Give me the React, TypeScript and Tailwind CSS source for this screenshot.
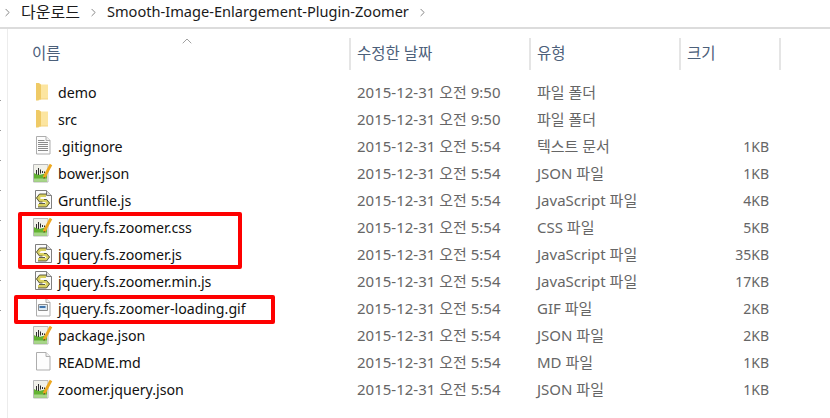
import { ChevronRight, ChevronUp } from 'lucide-react';

type IconKind = 'folder' | 'text' | 'json' | 'js' | 'gif' | 'blank';

type FileRow = {
  name: string;
  date: string;
  kind: string;
  size: string;
  icon: IconKind;
};

const rows: FileRow[] = [
  { name: 'demo', date: '2015-12-31 오전 9:50', kind: '파일 폴더', size: '', icon: 'folder' },
  { name: 'src', date: '2015-12-31 오전 9:50', kind: '파일 폴더', size: '', icon: 'folder' },
  { name: '.gitignore', date: '2015-12-31 오전 5:54', kind: '텍스트 문서', size: '1KB', icon: 'text' },
  { name: 'bower.json', date: '2015-12-31 오전 5:54', kind: 'JSON 파일', size: '1KB', icon: 'json' },
  { name: 'Gruntfile.js', date: '2015-12-31 오전 5:54', kind: 'JavaScript 파일', size: '4KB', icon: 'js' },
  { name: 'jquery.fs.zoomer.css', date: '2015-12-31 오전 5:54', kind: 'CSS 파일', size: '5KB', icon: 'json' },
  { name: 'jquery.fs.zoomer.js', date: '2015-12-31 오전 5:54', kind: 'JavaScript 파일', size: '35KB', icon: 'js' },
  { name: 'jquery.fs.zoomer.min.js', date: '2015-12-31 오전 5:54', kind: 'JavaScript 파일', size: '17KB', icon: 'js' },
  { name: 'jquery.fs.zoomer-loading.gif', date: '2015-12-31 오전 5:54', kind: 'GIF 파일', size: '2KB', icon: 'gif' },
  { name: 'package.json', date: '2015-12-31 오전 5:54', kind: 'JSON 파일', size: '2KB', icon: 'json' },
  { name: 'README.md', date: '2015-12-31 오전 5:54', kind: 'MD 파일', size: '1KB', icon: 'blank' },
  { name: 'zoomer.jquery.json', date: '2015-12-31 오전 5:54', kind: 'JSON 파일', size: '1KB', icon: 'json' },
];

const gripDots = [0, 1, 2, 3, 4, 5, 6, 7];

function FileIcon({ icon }: { icon: IconKind }) {
  if (icon === 'folder') {
    return (
      <svg width="20" height="20" viewBox="0 0 20 20">
        <path d="M3 1h3l2 1.500V17l-3 1.500H3z" fill="#efca66" />
        <path d="M8 2.500h7V17H8z" fill="#fce5a0" />
        <path d="M5 18.500 8 16.500h7V17.500H8.500z" fill="#f3d480" />
      </svg>
    );
  }
  if (icon === 'json') {
    return (
      <svg width="20" height="20" viewBox="0 0 20 20">
        <path d="M.5 1.500h14.500V19H.5z" fill="#f1f1ea" stroke="#b8b8b8" />
        <path d="M1 10c4 2.500 8 2 13-.5V18.500H1z" fill="#62b332" />
        <path d="M1 15.500h13v3H1z" fill="#a7d688" />
        <path d="M3.500 11.500V7M5.500 12V5M7.500 10.500V6.500M9.500 10V8M11.500 10V8.500" stroke="#2f2f2f" strokeWidth="1" />
        <path d="M11 14.500 18 1.500" stroke="#eda81f" strokeWidth="2.800" />
        <path d="M10.500 16l.5-2 1.500.8z" fill="#5b4a22" />
      </svg>
    );
  }
  if (icon === 'js') {
    return (
      <svg width="20" height="20" viewBox="0 0 20 20">
        <path d="M2.500.5h11l5 5v13h-16z" fill="#fbfbfb" stroke="#7f7f7f" />
        <path d="M13.500.5v5h5" fill="#dcdcdc" stroke="#7f7f7f" />
        <path d="M13 5.500H7L5 8l2 2.500h6l2 2.500-2 2.500H5" fill="none" stroke="#d9d060" strokeWidth="3.200" />
        <path d="M14 4H6.500L3.500 8l3 4h3M11 9.500h2.500l3 3.500-3 4H5M6 13.500h6" fill="none" stroke="#4b4b3a" strokeWidth=".9" />
      </svg>
    );
  }
  return (
    <svg width="20" height="20" viewBox="0 0 20 20">
      <path d="M3.500.5H13l4 4v13.500H3.500z" fill="#fdfdfd" stroke="#adadad" />
      <path d="M13 .5v4h4" fill="#f0f0f0" stroke="#adadad" />
      {icon === 'text' && (
        <path d="M5 4.500h6.500M5 6.500h10M5 8.500h10M5 10.500h10M5 12.500h10M5 14.500h10" stroke="#8b8b8b" strokeWidth="1" />
      )}
      {icon === 'gif' && (
        <>
          <path d="M5.500 6.500h9v6h-9z" fill="#dbe8f3" stroke="#8e8e8e" />
          <path d="M6.500 8h6v2h-6z" fill="#3f74ad" />
        </>
      )}
    </svg>
  );
}

function HeaderCell({ label, className }: { label: string; className: string }) {
  return (
    <div className={`flex h-8 items-center border-l-2 border-[#e5e5e5] ${className}`}>
      <span>{label}</span>
    </div>
  );
}

export default function App() {
  return (
    <div className="relative h-[418px] w-[830px] overflow-hidden bg-white text-[14px] font-['Noto_Sans','Noto_Sans_CJK_KR',sans-serif]">
      {/* Address bar */}
      <div className="flex h-[29px] items-center border-b-2 border-[#dcdcdc] pb-[3px] text-[14.600px] text-[#1a1a1a]">
        <ChevronRight size={13} strokeWidth={1.75} className="ml-[1px] text-[#808080]" />
        <span className="ml-[7px] text-[16px]">다운로드</span>
        <ChevronRight size={13} strokeWidth={1.75} className="ml-[7px] text-[#808080]" />
        <span className="ml-[7px]">Smooth-Image-Enlargement-Plugin-Zoomer</span>
        <ChevronRight size={13} strokeWidth={1.75} className="ml-[7px] text-[#808080]" />
      </div>

      {/* Splitter grip dots at the window edge */}
      <div className="absolute left-0 top-[100px] flex flex-col gap-[29px]">
        {gripDots.map((dot) => (
          <div key={dot} className="h-[1px] w-[1px] bg-[#9a9a9a]" />
        ))}
      </div>

      {/* Body with the nav pane divider */}
      <div className="ml-[7px] h-[389px] border-l border-[#ececec] pt-[9px]">
        <div className="relative grid grid-cols-[341px_180px_150px_100px_1fr] text-[15.500px] text-[#4c607a]">
          <ChevronUp size={16} strokeWidth={1} className="absolute left-[171px] top-[-5px] text-[#707070]" />
          <div className="flex h-8 items-center pl-[24px]">이름</div>
          <HeaderCell label="수정한 날짜" className="pl-[6px]" />
          <HeaderCell label="유형" className="pl-[6px]" />
          <HeaderCell label="크기" className="pl-[6px]" />
          <div className="h-8 w-[2px] bg-[#e5e5e5]" />
        </div>

        <div className="mt-[9px]">
          {rows.map((row) => (
            <div key={row.name} className="grid h-[27px] grid-cols-[341px_180px_150px_90px] items-center text-[15px] text-[#666666]">
              <div className="flex items-center text-[14.200px] text-[#111111]">
                <span className="ml-[25px] flex w-[25px] shrink-0">
                  <FileIcon icon={row.icon} />
                </span>
                <span>{row.name}</span>
              </div>
              <div className="pl-[8px]">{row.date}</div>
              <div className="pl-[8px]">{row.kind}</div>
              <div className="text-right text-[14px]">{row.size}</div>
            </div>
          ))}
        </div>
      </div>

      {/* Red annotations drawn over the screenshot */}
      <div className="absolute left-[18px] top-[212px] h-[57px] w-[224px] rounded-[2px] border-4 border-[#fe0000]" />
      <div className="absolute left-[14px] top-[295px] h-[29px] w-[261px] rounded-[2px] border-4 border-[#fe0000]" />
    </div>
  );
}
